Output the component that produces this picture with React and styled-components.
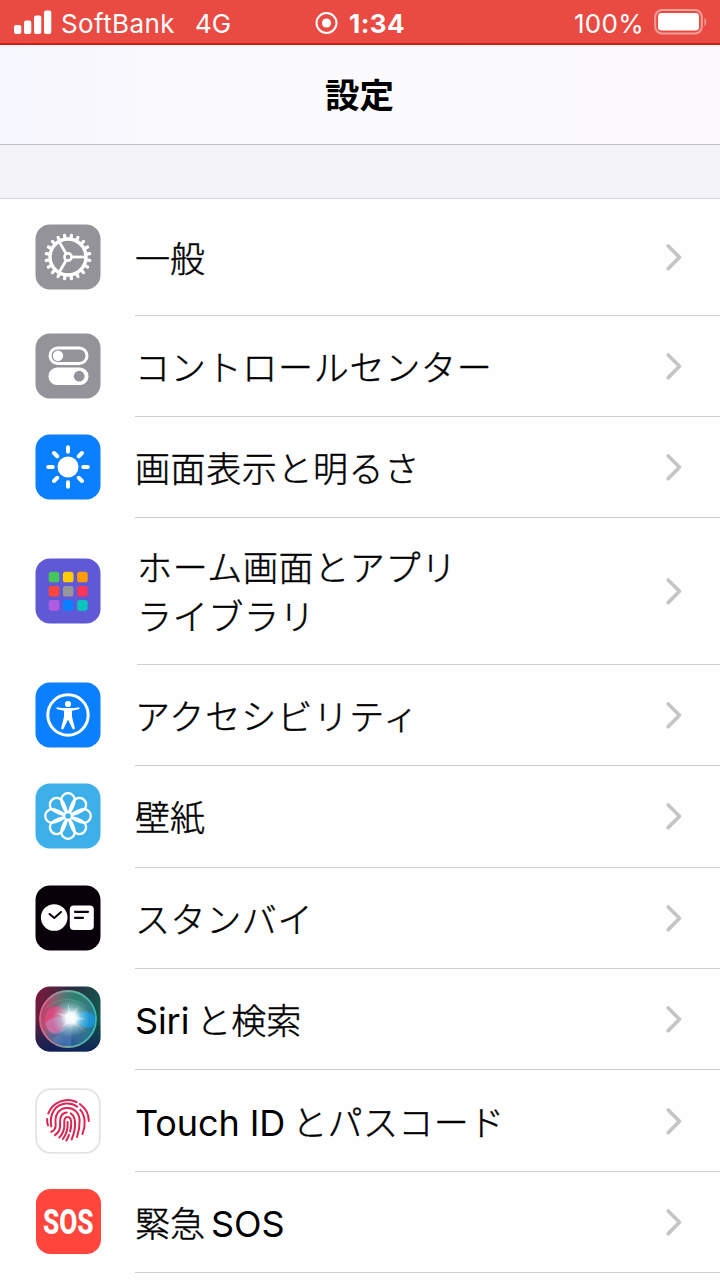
import React from "react";
import styled, { createGlobalStyle } from "styled-components";

const GlobalStyle = createGlobalStyle`
  * {
    box-sizing: border-box;
  }
  body {
    margin: 0;
    background-color: #fefefe;
    color: #000;
    font-family: Inter, "Noto Sans CJK JP", sans-serif;
  }
`;

const Screen = styled.main`
  width: 720px;
  height: 1280px;
  overflow: hidden;
  background-color: #fefefe;
`;

// Status bar (red while the screen is being recorded)

const StatusBar = styled.header`
  display: grid;
  grid-template-columns: 1fr auto 1fr;
  align-items: center;
  height: 45px;
  padding: 1px 12px 0 14px;
  color: #fff;
  background-color: #e94b43;
  border-bottom: 2px solid #cf1f17;
  font-size: 26px;
`;

const StatusGroup = styled.div`
  display: flex;
  align-items: center;
  justify-content: ${({ $end }) => ($end ? "flex-end" : "flex-start")};
  margin-left: ${({ $shift }) => $shift || 0}px;
`;

const StatusText = styled.span`
  padding-top: 3px;
  font-size: 26px;
  font-weight: ${({ $bold }) => ($bold ? 650 : 430)};
  letter-spacing: ${({ $spacing }) => $spacing || 0}px;
  margin-left: ${({ $gap }) => $gap || 0}px;
  line-height: 38px;
`;

const NavBar = styled.div`
  display: flex;
  align-items: center;
  justify-content: center;
  height: 100px;
  padding: 2px 1px 0 0;
  background: linear-gradient(90deg, #f6f6fe 0%, #f8f7fe 12%, #fbfafd 24%, #fcfafd 100%);
  border-bottom: 1.5px solid #bfbec4;
`;

const Title = styled.h1`
  margin: 0;
  font-size: 34.5px;
  font-weight: 700;
  line-height: 50px;
`;

const SectionGap = styled.div`
  height: 54px;
  background-color: #f3f2f9;
  border-bottom: 1px solid #d3d2d8;
`;

// Settings list

const List = styled.ul`
  margin: 0;
  padding: 0;
  list-style: none;
`;

const Row = styled.li`
  display: flex;
  height: ${({ $height }) => $height}px;
  padding-left: 35px;
`;

const IconCell = styled.div`
  display: flex;
  align-items: center;
  width: ${({ $width }) => $width || 100}px;
  padding-bottom: 1px;
`;

const RowBody = styled.div`
  flex: 1;
  display: flex;
  align-items: center;
  justify-content: space-between;
  padding-right: 37px;
  border-bottom: 1.5px solid #cfcfd2;
`;

const Label = styled.span`
  padding-top: 5px;
  font-size: 35px;
  line-height: 49px;
  font-weight: 300;
  letter-spacing: ${({ $spacing }) => $spacing || 0}px;
  white-space: pre;
  -webkit-text-stroke: 0.45px #000;
`;

const Latin = styled.span`
  font-weight: 370;
  font-size: 36px;
  letter-spacing: -0.1px;
  margin: ${({ $end }) => ($end ? "0 0 0 6px" : "0 7px 0 0")};
  -webkit-text-stroke: 0;
`;

const Tile = styled.svg`
  display: block;
  width: 66px;
  height: 66px;
`;

const TileBase = ({ fill, stroke }) => (
  <rect
    x={stroke ? 1.2 : 0.5}
    y={stroke ? 1.2 : 0.5}
    width={stroke ? 63.6 : 65}
    height={stroke ? 63.6 : 65}
    rx="14.5"
    fill={fill}
    stroke={stroke}
    strokeWidth={stroke ? 1.8 : 0}
  />
);

const range = (n) => Array.from({ length: n }, (_, i) => i);

const GearIcon = () => (
  <Tile viewBox="0 0 66 66">
    <TileBase fill="#94939a" />
    <g stroke="#fff" fill="none">
      <circle cx="33" cy="33" r="18" strokeWidth="3.4" />
      {range(20).map((i) => (
        <path key={i} d="M33 11v4" strokeWidth="3.2" strokeLinecap="round" transform={`rotate(${i * 18 + 9} 33 33)`} />
      ))}
      <circle cx="33" cy="33" r="3.6" strokeWidth="2.6" />
      {[90, 210, 330].map((a) => (
        <path key={a} d="M33 29V15" strokeWidth="2.8" transform={`rotate(${a} 33 33)`} />
      ))}
    </g>
  </Tile>
);

const ControlIcon = () => (
  <Tile viewBox="0 0 66 66">
    <TileBase fill="#94939a" />
    <rect x="15" y="15" width="37" height="15.5" rx="7.7" fill="none" stroke="#fff" strokeWidth="3" />
    <circle cx="23" cy="22.8" r="5.2" fill="#fff" />
    <rect x="13.5" y="34.5" width="40" height="17.5" rx="8.7" fill="#fff" />
    <circle cx="44.2" cy="43.2" r="5.4" fill="#94939a" />
  </Tile>
);

const SunIcon = () => (
  <Tile viewBox="0 0 66 66">
    <TileBase fill="#0a7fff" />
    <circle cx="33" cy="33" r="10.5" fill="#fff" />
    {range(8).map((i) => (
      <path key={i} d="M33 13.2v4.6" stroke="#fff" strokeWidth="4" strokeLinecap="round" transform={`rotate(${i * 45} 33 33)`} />
    ))}
  </Tile>
);

const appColors = ["#44c65b", "#ffcc02", "#ff9a08", "#ff453c", "#96959b", "#f9355c", "#b15be4", "#0a7fff", "#08c5bd"];

const HomeIcon = () => (
  <Tile viewBox="0 0 66 66">
    <TileBase fill="#6059d5" />
    {appColors.map((color, i) => (
      <rect key={color} x={13.7 + (i % 3) * 14.2} y={13.7 + Math.floor(i / 3) * 14.2} width="10.6" height="10.6" rx="2.6" fill={color} />
    ))}
  </Tile>
);

const AccessibilityIcon = () => (
  <Tile viewBox="0 0 66 66">
    <TileBase fill="#0a7fff" />
    <circle cx="33" cy="33" r="20.2" fill="none" stroke="#fff" strokeWidth="3" />
    <circle cx="33" cy="22" r="3.1" fill="#fff" />
    <path
      d="M22.8 25.2c3 .6 6 .9 10.2.9s7.2-.3 10.2-.9c1.500-.3 1.900 1.700.5 2.100l-6.700 1.500v6l2.800 10.900c.4 1.700-1.800 2.400-2.500.8L33 37.500l-4.300 9c-.7 1.600-2.900.9-2.500-.8L29 34.800v-6l-6.700-1.500c-1.400-.4-1-2.400.5-2.100z"
      fill="#fff"
    />
  </Tile>
);

const WallpaperIcon = () => (
  <Tile viewBox="0 0 66 66">
    <TileBase fill="#3eb0e9" />
    <g fill="none" stroke="#fff" strokeWidth="2.3">
      {range(8).map((i) => (
        <path
          key={i}
          d="M33 32C30 28.500 26.200 21 26.200 17a6.800 6.800 0 0 1 13.600 0C39.800 21 36 28.500 33 32"
          transform={`rotate(${i * 45} 33 33)`}
        />
      ))}
    </g>
    <circle cx="33" cy="33" r="3.700" fill="#3eb0e9" stroke="#fff" strokeWidth="1.900" />
  </Tile>
);

const StandByIcon = () => (
  <Tile viewBox="0 0 66 66">
    <TileBase fill="#080109" />
    <circle cx="19.2" cy="32.5" r="13.3" fill="#fff" />
    <path d="M14.5 29l4.800 4 6.700-6" fill="none" stroke="#080109" strokeWidth="2" strokeLinecap="round" strokeLinejoin="round" />
    <rect x="34.8" y="20.5" width="24" height="24.5" rx="4" fill="#fff" />
    <path d="M40 26.800h13M40 32.800h8" stroke="#080109" strokeWidth="2.2" strokeLinecap="round" />
  </Tile>
);

const SiriIcon = () => (
  <Tile viewBox="0 0 66 66">
    <defs>
      <linearGradient id="siriBase" x1="0" y1="0" x2="1" y2="0.3">
        <stop offset="0" stopColor="#86183c" />
        <stop offset="0.5" stopColor="#2a2c40" />
        <stop offset="1" stopColor="#14564b" />
      </linearGradient>
      <linearGradient id="siriShade" x1="0" y1="0" x2="0" y2="1">
        <stop offset="0.5" stopColor="#101a50" stopOpacity="0" />
        <stop offset="1" stopColor="#101f5c" stopOpacity="0.9" />
      </linearGradient>
      <linearGradient id="siriOrb" x1="0" y1="0.3" x2="1" y2="0.6">
        <stop offset="0" stopColor="#c23c62" />
        <stop offset="0.45" stopColor="#77808f" />
        <stop offset="1" stopColor="#1c7590" />
      </linearGradient>
      <linearGradient id="siriRing" x1="0" y1="0.5" x2="1" y2="0.5">
        <stop offset="0" stopColor="#e0608a" />
        <stop offset="0.5" stopColor="#78ad9d" />
        <stop offset="1" stopColor="#38bab8" />
      </linearGradient>
      <radialGradient id="siriGlow">
        <stop offset="0" stopColor="#fff" />
        <stop offset="0.28" stopColor="#f4fbff" stopOpacity="0.95" />
        <stop offset="0.6" stopColor="#b5e6ee" stopOpacity="0.45" />
        <stop offset="1" stopColor="#9fe0e8" stopOpacity="0" />
      </radialGradient>
      <radialGradient id="siriTop" cx="0.65" cy="0.1" r="0.5">
        <stop offset="0" stopColor="#188064" stopOpacity="0.8" />
        <stop offset="1" stopColor="#188064" stopOpacity="0" />
      </radialGradient>
      <radialGradient id="siriBottom" cx="0.45" cy="1" r="0.5">
        <stop offset="0" stopColor="#194c98" />
        <stop offset="1" stopColor="#265da5" stopOpacity="0" />
      </radialGradient>
    </defs>
    <TileBase fill="url(#siriBase)" />
    <TileBase fill="url(#siriShade)" />
    <circle cx="33" cy="33" r="28" fill="url(#siriOrb)" />
    <circle cx="33" cy="33" r="28" fill="url(#siriTop)" />
    <circle cx="33" cy="33" r="28" fill="url(#siriBottom)" />
    <path d="M37 33C31 22 23 18 16 22S7 39 13 44s15 2 24-11z" fill="#ec447c" fillOpacity="0.75" />
    <path d="M11 37c5-7 14-7 26-4-4 9-10 15-17 15-5 0-8-4-9-11z" fill="#c58cc4" fillOpacity="0.55" />
    <path d="M36 33c7-6 14-10 20-6s4 11 0 14-11-1-20-8z" fill="#1899e0" fillOpacity="0.85" />
    <path d="M37 34L17 54c6 5 12 7 19 6z" fill="#7fa4dc" fillOpacity="0.3" />
    <path d="M38 34l15 14-13-11z" fill="#f2a0a8" fillOpacity="0.7" />
    <path d="M12 22C22 10 45 12 51 21" fill="none" stroke="#6ab090" strokeOpacity="0.5" />
    <circle cx="33" cy="33" r="28" fill="none" stroke="url(#siriRing)" strokeWidth="1.8" />
    <circle cx="36" cy="32" r="19" fill="url(#siriGlow)" />
    <path d="M33 17l3 11 8-8-5 10 12 3-12 1 4 7-7-5-9 5 6-8-12-6 12 2z" fill="#fff" fillOpacity="0.4" />
  </Tile>
);

const TouchIdIcon = () => (
  <Tile viewBox="0 0 66 66">
    <TileBase fill="#fff" stroke="#e4e3e8" />
    <g fill="none" stroke="#dc2450" strokeWidth="2" strokeLinecap="round">
      <path d="M13.300 25.500A21 21 0 0 1 41.500 14" />
      <path d="M44.800 16A21 21 0 0 1 53.800 33" />
      <path d="M12.200 31c-.3 2 0 4 .8 6.500" />
      <path d="M16.300 38.500C14 26 20 16.500 31 15.600c4.500-.3 8.300 1 11.300 3.200" />
      <path d="M45.300 21.800c5.200 6 5.600 15.500 2.200 24.200" />
      <path d="M16.300 43.800c3.700-1.500 4.700-4 4.300-8-.9-9 3-15 10.400-15.800 8-.8 13.400 5 13.600 12.500.1 6-.6 11-2.600 16.500" />
      <path d="M20 47.200c4.500-3 5.600-7 5.100-12.200-.5-6.500 2-10.300 6.700-10.600" />
      <path d="M35.700 25.400c6 3.500 5.300 15.500 1 26" />
      <path d="M24.300 49.500c4.500-4.500 5.500-9.500 5-15-.3-3.500 1-5.400 3.300-5.400 4.800 0 4 8.900 2.500 14.400" />
      <path d="M34 46.800c-.8 2.200-1.500 3.700-2.600 5.700" />
      <path d="M32.600 34c.4 6-.8 12-4.800 17" />
    </g>
  </Tile>
);

const SosTile = styled.div`
  display: flex;
  align-items: center;
  justify-content: center;
  width: 65px;
  height: 65px;
  margin: 0 0 0 0.5px;
  border-radius: 14.5px;
  background-color: #ff453c;
`;

const SosText = styled.span`
  color: #fff;
  font-family: Roboto, sans-serif;
  font-size: 34.5px;
  font-weight: 800;
  line-height: 40px;
  transform: scaleX(0.76);
`;

const SosIcon = () => (
  <SosTile>
    <SosText>SOS</SosText>
  </SosTile>
);

const Chevron = () => (
  <svg width="18" height="30" viewBox="0 0 18 30">
    <path d="M3.2 4l11.300 11.300-11.300 11.300" fill="none" stroke="#c5c5c8" strokeWidth="3.7" strokeLinecap="round" strokeLinejoin="round" />
  </svg>
);

const SignalIcon = () => (
  <svg width="40" height="26" viewBox="0 0 40 26">
    <g fill="#fff">
      <rect x="0" y="16" width="7.3" height="9" rx="2" />
      <rect x="10" y="11.500" width="7.3" height="13.500" rx="2" />
      <rect x="20" y="6.500" width="7.3" height="18.500" rx="2" />
      <rect x="30" y="1.500" width="7.3" height="23.500" rx="2" />
    </g>
  </svg>
);

const RecordIcon = () => (
  <svg width="24" height="24" viewBox="0 0 24 24">
    <circle cx="12.500" cy="13" r="10" fill="none" stroke="#fff" strokeWidth="2" />
    <circle cx="12.500" cy="13" r="4.6" fill="#fff" />
  </svg>
);

const BatteryIcon = () => (
  <svg width="55" height="28" viewBox="0 0 55 28">
    <rect x="2.200" y="2" width="46.600" height="23.600" rx="7" fill="none" stroke="#f59f9a" strokeWidth="2" />
    <rect x="5" y="5" width="41" height="17.600" rx="3.500" fill="#fff" />
    <path d="M51.500 10c2.200 1 2.200 7 0 8z" fill="#f59f9a" />
  </svg>
);

const settings = [
  { icon: GearIcon, label: "一般", height: 116.8 },
  { icon: ControlIcon, label: "コントロールセンター", height: 101, spacing: 0.75 },
  { icon: SunIcon, label: "画面表示と明るさ", height: 101.4, spacing: 0.6 },
  { icon: HomeIcon, label: "ホーム画面とアプリ\nライブラリ", height: 146.6, spacing: 0.65, iconWidth: 102 },
  { icon: AccessibilityIcon, label: "アクセシビリティ", height: 101.4, spacing: 1 },
  { icon: WallpaperIcon, label: "壁紙", height: 101.4 },
  { icon: StandByIcon, label: "スタンバイ", height: 101.4, spacing: 0.6 },
  { icon: SiriIcon, latin: "Siri", label: "と検索", height: 101.4 },
  { icon: TouchIdIcon, latin: "Touch ID", label: "とパスコード", height: 101.4, spacing: 0.4 },
  { icon: SosIcon, label: "緊急", latinEnd: "SOS", height: 101.4 },
];

const App = () => {
  return (
    <Screen>
      <GlobalStyle />
      <StatusBar>
        <StatusGroup>
          <SignalIcon />
          <StatusText $gap={7} $spacing={0.4}>
            SoftBank
          </StatusText>
          <StatusText $gap={20}>4G</StatusText>
        </StatusGroup>
        <StatusGroup $shift={-3}>
          <RecordIcon />
          <StatusText $bold $gap={11} $spacing={0.4}>
            1:34
          </StatusText>
        </StatusGroup>
        <StatusGroup $end>
          <StatusText $spacing={0.3}>100%</StatusText>
          <StatusText $gap={9} />
          <BatteryIcon />
        </StatusGroup>
      </StatusBar>
      <NavBar>
        <Title>設定</Title>
      </NavBar>
      <SectionGap />
      <List>
        {settings.map(({ icon: Icon, label, latin, latinEnd, height, spacing, iconWidth }) => (
          <Row key={label} $height={height}>
            <IconCell $width={iconWidth}>
              <Icon />
            </IconCell>
            <RowBody>
              <Label $spacing={spacing}>
                {latin && <Latin>{latin}</Latin>}
                {label}
                {latinEnd && <Latin $end>{latinEnd}</Latin>}
              </Label>
              <Chevron />
            </RowBody>
          </Row>
        ))}
      </List>
    </Screen>
  );
};

export default App;
